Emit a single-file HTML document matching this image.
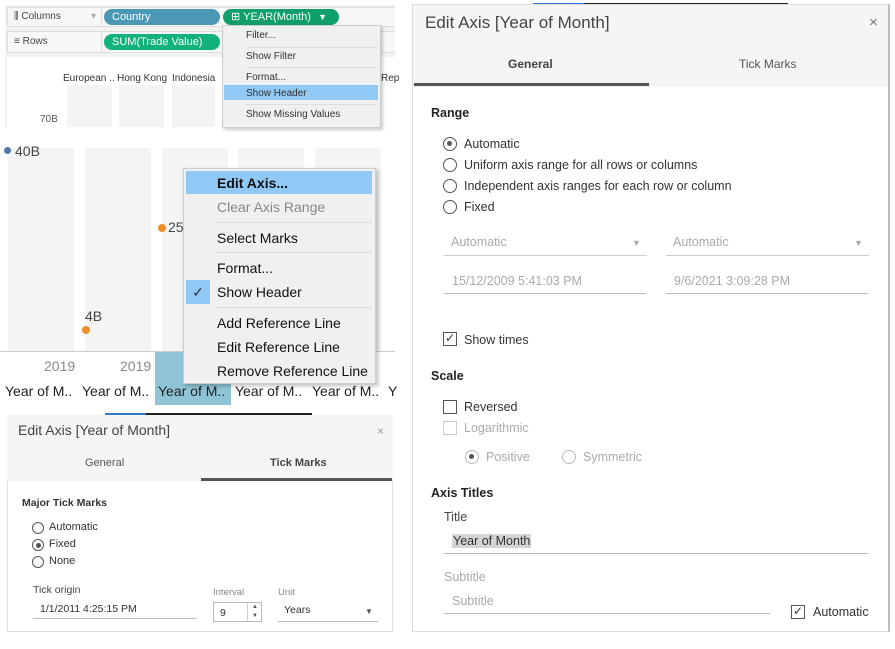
<!DOCTYPE html>
<html><head><meta charset="utf-8"><style>
*{box-sizing:border-box;margin:0;padding:0}
body{width:895px;height:649px;background:#fff;position:relative;overflow:hidden;font-family:"Liberation Sans",Arial,sans-serif;color:#333}
.a{position:absolute;white-space:nowrap}
.pill{position:absolute;height:16px;border-radius:8px;color:#fff;font-size:11px;line-height:16px;padding-left:8px}
.rad{position:absolute;width:14px;height:14px;border:1.5px solid #555;border-radius:50%}
.rad.on::after{content:"";position:absolute;left:3px;top:3px;width:5px;height:5px;border-radius:50%;background:#555}
.cb{position:absolute;width:14px;height:14px;border:1.5px solid #555}
.ln{position:absolute;height:1px;background:#bbb}
.bar{position:absolute;background:#f4f4f4}
.xl{position:absolute;top:383px;font-size:14px;color:#222;white-space:nowrap}
</style></head><body>

<div class="a" style="left:5px;top:5px;width:390px;height:122px;background:#f2f2f2"></div>
<div class="a" style="left:7px;top:7px;width:95px;height:20px;background:#f7f7f7;border:1px solid #ddd;font-size:10px;line-height:18px;padding-left:6px;color:#444">⫼ Columns<span style="position:absolute;right:5px;color:#aaa">▾</span></div>
<div class="a" style="left:7px;top:31px;width:95px;height:22px;background:#f7f7f7;border:1px solid #ddd;font-size:10px;line-height:20px;padding-left:6px;color:#444">≡ Rows</div>
<div class="a" style="left:102px;top:7px;width:293px;height:20px;background:#f7f7f7;border-top:1px solid #ddd;border-bottom:1px solid #ddd"></div>
<div class="a" style="left:102px;top:31px;width:293px;height:22px;background:#f7f7f7;border-top:1px solid #ddd;border-bottom:1px solid #ddd"></div>
<div class="pill" style="left:104px;top:9px;width:116px;background:#4a98b3">Country</div>
<div class="pill" style="left:223px;top:9px;width:116px;background:#0f9f6a">⊞ YEAR(Month)<span style="position:absolute;right:12px;font-size:9px">▼</span></div>
<div class="pill" style="left:104px;top:34px;width:116px;background:#13b27a">SUM(Trade Value)</div>
<div class="a" style="left:7px;top:57px;width:388px;height:70px;background:#fff"></div>
<div class="a" style="left:63px;top:73px;font-size:10px">European ..</div>
<div class="a" style="left:117px;top:73px;font-size:10px">Hong Kong</div>
<div class="a" style="left:172px;top:73px;font-size:10px">Indonesia</div>
<div class="a" style="left:381px;top:73px;font-size:10px">Rep</div>
<div class="bar" style="left:67px;top:85px;width:45px;height:42px"></div>
<div class="bar" style="left:119px;top:85px;width:45px;height:42px"></div>
<div class="bar" style="left:172px;top:85px;width:43px;height:42px"></div>
<div class="a" style="left:40px;top:114px;font-size:10px;color:#555">70B</div>
<div class="a" style="left:222px;top:25px;width:159px;height:103px;background:#f0f0f0;border:1px solid #ccc;box-shadow:2px 2px 3px rgba(0,0,0,.2)"></div>
<div class="a" style="left:246px;top:30px;font-size:10px">Filter...</div>
<div class="ln" style="left:246px;top:47px;width:132px;background:#ddd"></div>
<div class="a" style="left:246px;top:51px;font-size:10px">Show Filter</div>
<div class="ln" style="left:246px;top:67px;width:132px;background:#ddd"></div>
<div class="a" style="left:246px;top:72px;font-size:10px">Format...</div>
<div class="a" style="left:224px;top:85px;width:154px;height:15px;background:#90c8f6"></div>
<div class="a" style="left:246px;top:88px;font-size:10px">Show Header</div>
<div class="ln" style="left:246px;top:104px;width:132px;background:#ddd"></div>
<div class="a" style="left:246px;top:109px;font-size:10px">Show Missing Values</div>

<div class="bar" style="left:8px;top:148px;width:66px;height:203px"></div>
<div class="bar" style="left:85px;top:148px;width:66px;height:203px"></div>
<div class="bar" style="left:162px;top:148px;width:66px;height:203px"></div>
<div class="bar" style="left:238px;top:148px;width:66px;height:203px"></div>
<div class="bar" style="left:315px;top:148px;width:66px;height:203px"></div>
<div class="a" style="left:4px;top:147px;width:7px;height:7px;border-radius:50%;background:#4e79a7"></div>
<div class="a" style="left:15px;top:143px;font-size:14px;color:#444">40B</div>
<div class="a" style="left:158px;top:224px;width:8px;height:8px;border-radius:50%;background:#f28e2b"></div>
<div class="a" style="left:168px;top:219px;font-size:14px;color:#444">25</div>
<div class="a" style="left:82px;top:326px;width:8px;height:8px;border-radius:50%;background:#f28e2b"></div>
<div class="a" style="left:85px;top:308px;font-size:14px;color:#444">4B</div>
<div class="ln" style="left:0;top:351px;width:395px;background:#ccc"></div>
<div class="a" style="left:155px;top:352px;width:76px;height:53px;background:#8ec4d5"></div>
<div class="a" style="left:44px;top:358px;font-size:14px;color:#888">2019</div>
<div class="a" style="left:120px;top:358px;font-size:14px;color:#888">2019</div>
<div class="xl" style="left:5px">Year of M..</div>
<div class="xl" style="left:82px">Year of M..</div>
<div class="xl" style="left:158px">Year of M..</div>
<div class="xl" style="left:235px">Year of M..</div>
<div class="xl" style="left:312px">Year of M..</div>
<div class="xl" style="left:388px">Y</div>
<div class="a" style="left:183px;top:168px;width:193px;height:216px;background:#f0f0f0;border:1px solid #ccc;box-shadow:2px 2px 4px rgba(0,0,0,.25)"></div>
<div class="a" style="left:186px;top:171px;width:186px;height:23px;background:#90c8f6"></div>
<div class="a" style="left:217px;top:175px;font-size:14px;font-weight:bold;color:#111">Edit Axis...</div>
<div class="a" style="left:217px;top:199px;font-size:14px;color:#888">Clear Axis Range</div>
<div class="ln" style="left:214px;top:222px;width:158px;background:#ddd"></div>
<div class="a" style="left:217px;top:230px;font-size:14px;color:#111">Select Marks</div>
<div class="ln" style="left:214px;top:252px;width:158px;background:#ddd"></div>
<div class="a" style="left:217px;top:260px;font-size:14px;color:#111">Format...</div>
<div class="a" style="left:186px;top:280px;width:24px;height:24px;background:#90c8f6;text-align:center;line-height:24px;font-size:14px;color:#333">✓</div>
<div class="a" style="left:217px;top:284px;font-size:14px;color:#111">Show Header</div>
<div class="ln" style="left:214px;top:307px;width:158px;background:#ddd"></div>
<div class="a" style="left:217px;top:315px;font-size:14px;color:#111">Add Reference Line</div>
<div class="a" style="left:217px;top:339px;font-size:14px;color:#111">Edit Reference Line</div>
<div class="a" style="left:217px;top:363px;font-size:14px;color:#111">Remove Reference Line</div>

<div class="a" style="left:105px;top:413px;width:41px;height:2px;background:#2a7ad0"></div>
<div class="a" style="left:146px;top:413px;width:166px;height:2px;background:#222"></div>
<div class="a" style="left:7px;top:415px;width:386px;height:217px;background:#fff;border:1px solid #ddd"></div>
<div class="a" style="left:7px;top:415px;width:386px;height:66px;background:#f5f5f5"></div>
<div class="a" style="left:18px;top:422px;font-size:14px;color:#444">Edit Axis [Year of Month]</div>
<div class="a" style="left:377px;top:424px;font-size:12px;color:#999">×</div>
<div class="a" style="left:85px;top:457px;font-size:11px;color:#555">General</div>
<div class="a" style="left:270px;top:457px;font-size:11px;font-weight:bold;color:#444">Tick Marks</div>
<div class="a" style="left:201px;top:478px;width:191px;height:3px;background:#555"></div>
<div class="a" style="left:22px;top:497px;font-size:10.5px;font-weight:bold">Major Tick Marks</div>
<div class="rad" style="left:32px;top:522px;width:12px;height:12px;border-width:1px"></div>
<div class="a" style="left:49px;top:521px;font-size:11px">Automatic</div>
<div class="rad on" style="left:32px;top:539px;width:12px;height:12px;border-width:1px"></div>
<div class="a" style="left:49px;top:538px;font-size:11px">Fixed</div>
<div class="rad" style="left:32px;top:556px;width:12px;height:12px;border-width:1px"></div>
<div class="a" style="left:49px;top:555px;font-size:11px">None</div>
<div class="a" style="left:33px;top:584px;font-size:10.5px;color:#444">Tick origin</div>
<div class="a" style="left:40px;top:603px;font-size:10.5px">1/1/2011 4:25:15 PM</div>
<div class="ln" style="left:33px;top:618px;width:164px"></div>
<div class="a" style="left:213px;top:587px;font-size:9.5px;color:#888">Interval</div>
<div class="a" style="left:213px;top:602px;width:49px;height:20px;border:1px solid #bbb;font-size:10.5px;padding:4px 0 0 6px">9<span style="position:absolute;left:33px;top:0;width:1px;height:18px;background:#ccc"></span><span style="position:absolute;left:38px;top:1px;font-size:6px;color:#555">▲</span><span style="position:absolute;left:38px;top:10px;font-size:6px;color:#555">▼</span></div>
<div class="a" style="left:278px;top:587px;font-size:9.5px;color:#888">Unit</div>
<div class="a" style="left:284px;top:604px;font-size:10.5px">Years</div>
<div class="a" style="left:365px;top:607px;font-size:8px;color:#555">▼</div>
<div class="ln" style="left:278px;top:621px;width:100px"></div>

<div class="a" style="left:533px;top:3px;width:51px;height:2px;background:#2a7ad0"></div>
<div class="a" style="left:584px;top:3px;width:204px;height:2px;background:#222"></div>
<div class="a" style="left:412px;top:4px;width:478px;height:628px;background:#fff;border:1px solid #ddd;border-right:2px solid #bbb"></div>
<div class="a" style="left:413px;top:5px;width:475px;height:82px;background:#f5f5f5"></div>
<div class="a" style="left:425px;top:13px;font-size:17px;color:#444">Edit Axis [Year of Month]</div>
<div class="a" style="left:869px;top:14px;font-size:15px;color:#777">×</div>
<div class="a" style="left:508px;top:57px;font-size:12px;font-weight:bold;color:#444">General</div>
<div class="a" style="left:739px;top:57px;font-size:12px;color:#555">Tick Marks</div>
<div class="a" style="left:414px;top:83px;width:235px;height:3px;background:#555"></div>
<div class="a" style="left:431px;top:106px;font-size:12.5px;font-weight:bold;color:#222">Range</div>
<div class="rad on" style="left:443px;top:137px"></div>
<div class="a" style="left:464px;top:137px;font-size:12.5px">Automatic</div>
<div class="rad" style="left:443px;top:158px"></div>
<div class="a" style="left:464px;top:158px;font-size:12.5px">Uniform axis range for all rows or columns</div>
<div class="rad" style="left:443px;top:179px"></div>
<div class="a" style="left:464px;top:179px;font-size:12.5px">Independent axis ranges for each row or column</div>
<div class="rad" style="left:443px;top:200px"></div>
<div class="a" style="left:464px;top:200px;font-size:12.5px">Fixed</div>
<div class="a" style="left:451px;top:235px;font-size:12.5px;color:#aaa">Automatic</div>
<div class="a" style="left:632px;top:238px;font-size:9px;color:#aaa">▼</div>
<div class="ln" style="left:444px;top:255px;width:203px;background:#ccc"></div>
<div class="a" style="left:673px;top:235px;font-size:12.5px;color:#aaa">Automatic</div>
<div class="a" style="left:854px;top:238px;font-size:9px;color:#aaa">▼</div>
<div class="ln" style="left:666px;top:255px;width:203px;background:#ccc"></div>
<div class="a" style="left:452px;top:274px;font-size:12.5px;color:#aaa">15/12/2009 5:41:03 PM</div>
<div class="ln" style="left:444px;top:293px;width:202px"></div>
<div class="a" style="left:674px;top:274px;font-size:12.5px;color:#aaa">9/6/2021 3:09:28 PM</div>
<div class="ln" style="left:666px;top:293px;width:202px"></div>
<div class="cb" style="left:443px;top:332px;font-size:12px;line-height:11px;text-align:center">✓</div>
<div class="a" style="left:464px;top:333px;font-size:12.5px">Show times</div>
<div class="a" style="left:431px;top:369px;font-size:12.5px;font-weight:bold;color:#222">Scale</div>
<div class="cb" style="left:443px;top:400px"></div>
<div class="a" style="left:464px;top:400px;font-size:12.5px">Reversed</div>
<div class="cb" style="left:443px;top:421px;border-color:#ccc"></div>
<div class="a" style="left:464px;top:421px;font-size:12.5px;color:#aaa">Logarithmic</div>
<div class="rad on" style="left:465px;top:450px;border-color:#bbb"></div>
<div class="a" style="left:486px;top:450px;font-size:12.5px;color:#aaa">Positive</div>
<div class="rad" style="left:562px;top:450px;border-color:#bbb"></div>
<div class="a" style="left:583px;top:450px;font-size:12.5px;color:#aaa">Symmetric</div>
<div class="a" style="left:431px;top:486px;font-size:12.5px;font-weight:bold;color:#222">Axis Titles</div>
<div class="a" style="left:444px;top:510px;font-size:12.5px;color:#444">Title</div>
<div class="a" style="left:452px;top:534px;font-size:12.5px;background:#d4d4d4;color:#333;padding:0 1px">Year of Month</div>
<div class="ln" style="left:444px;top:553px;width:424px"></div>
<div class="a" style="left:444px;top:570px;font-size:12.5px;color:#aaa">Subtitle</div>
<div class="a" style="left:452px;top:594px;font-size:12.5px;color:#aaa">Subtitle</div>
<div class="ln" style="left:444px;top:613px;width:326px"></div>
<div class="cb" style="left:791px;top:605px;font-size:12px;line-height:11px;text-align:center">✓</div>
<div class="a" style="left:813px;top:605px;font-size:12.5px">Automatic</div>
</body></html>
